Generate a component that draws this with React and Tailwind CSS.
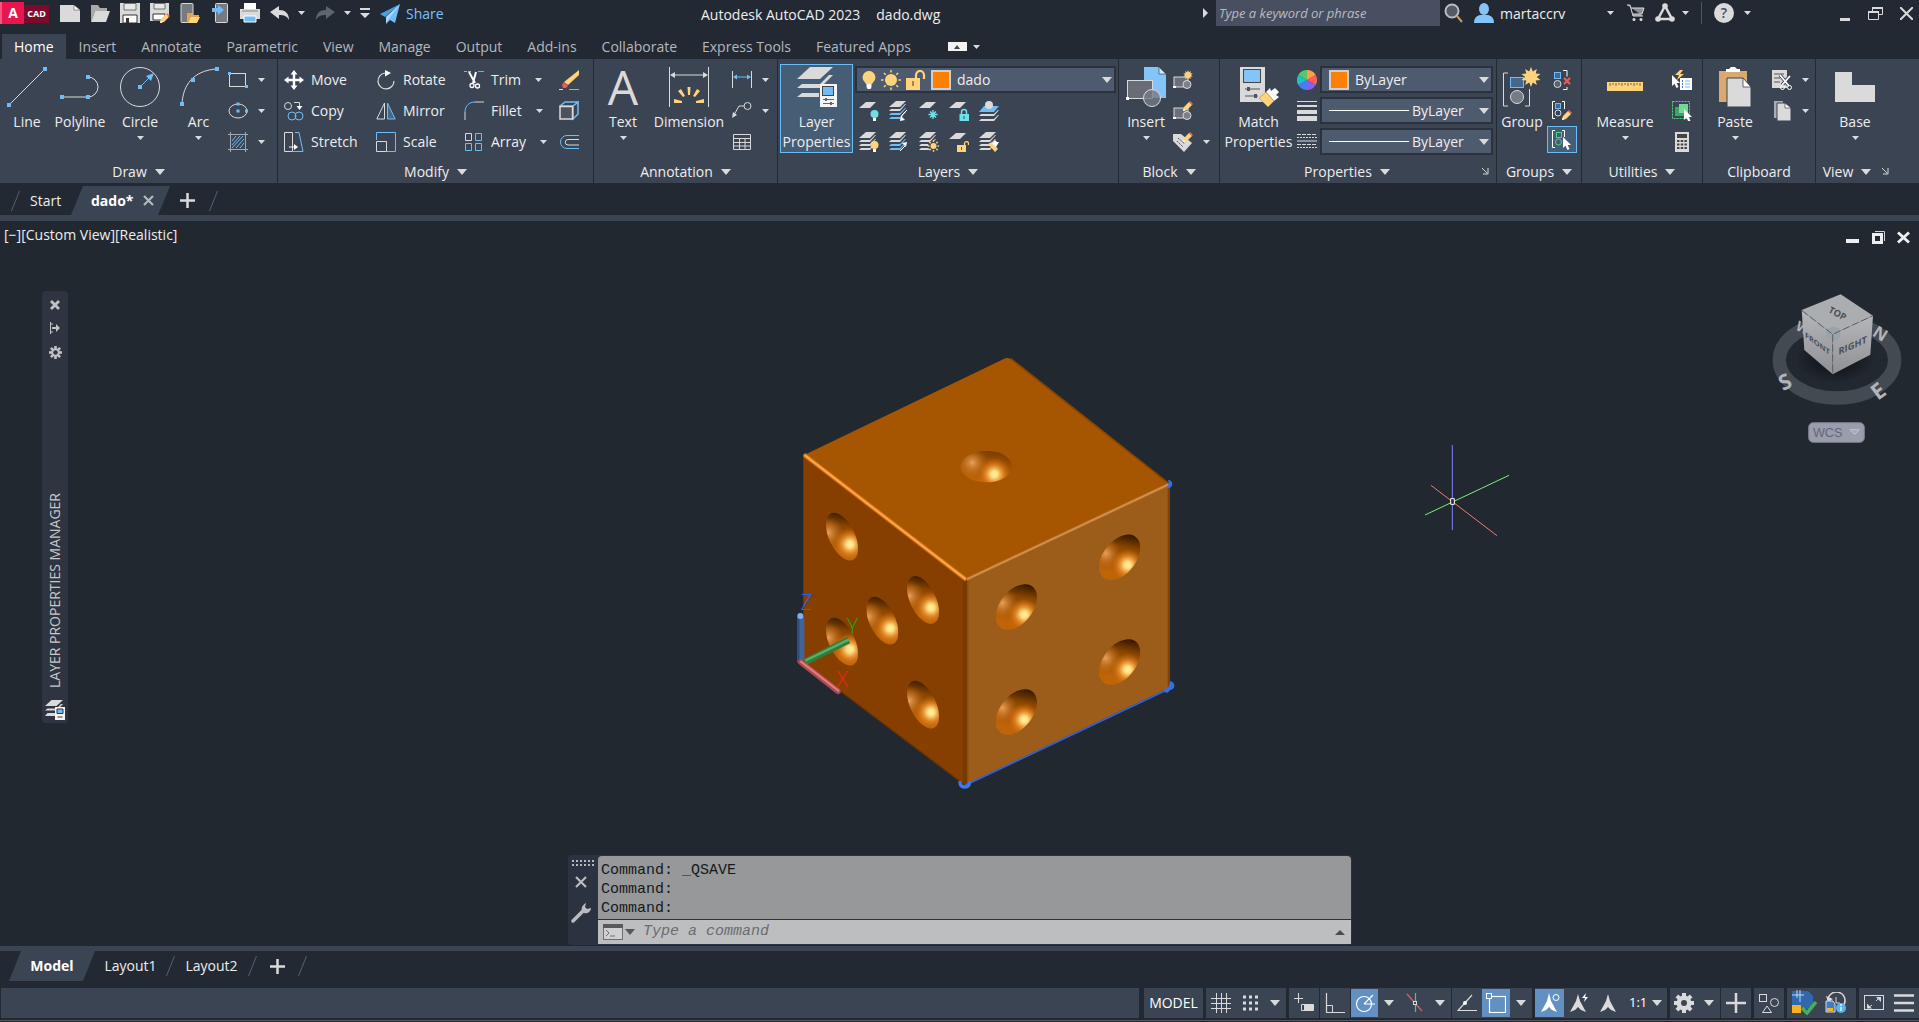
import React, { useState } from 'react';
import clsx from 'clsx';

const G = '#dadada';
const B = '#6fbdf7';
const Y = '#ffd37c';
const T = '#6fe0ea';
const DK = '#3b4453';

function Svg({ w = 20, h = 20, vb, className, children }) {
  return (
    <svg width={w} height={h} viewBox={vb || `0 0 ${w} ${h}`} fill="none" className={clsx('shrink-0', className)} aria-hidden="true">
      {children}
    </svg>
  );
}

function Caret({ size = 'sm', className }) {
  if (size === 'lg') {
    return <Svg w={10} h={6} className={className}><path d="M0 0h10L5 6z" fill={G} /></Svg>;
  }
  return <Svg w={7} h={4} className={className}><path d="M0 0h7L3.5 4z" fill={G} /></Svg>;
}

/* ---------- shared icon parts ---------- */

const Sheet = ({ x = 0, y = 0, fill = G }) => <path transform={`translate(${x} ${y})`} d="M7 0h10l-6 6H0z" fill={fill} />;

const Stack = ({ blue }) => (
  <>
    <path d="M7 0h10l-6 6H0z" fill={G} />
    <path d="M2 8h9l5-5h1l-6 7H0z" fill={G} />
    <path d="M2 12h9l5-5h1l-6 7H0z" fill={blue ? B : G} />
    <path d="M2 16h9l5-5h1l-6 7H0z" fill={blue ? B : G} />
  </>
);

const MiniBulb = ({ fill }) => (
  <>
    <circle cx="15.500" cy="13" r="4" fill={fill} />
    <path d="M14 17h3v3h-3z" fill="#fff" />
  </>
);

const Pencil = ({ x = 0, y = 0 }) => (
  <g transform={`translate(${x} ${y})`}>
    <path d="M0 10l1-4 5-5 3 3-5 5z" fill={Y} />
    <path d="M6 1l1-1 3 3-1 1z" fill="#ef6a63" />
    <path d="M0 10l.6-2.400L2.400 9.400z" fill="#fff" />
  </g>
);

const Cursor = ({ x = 0, y = 0 }) => (
  <path transform={`translate(${x} ${y})`} d="M0 0v11l2.500-2.300L4.500 13l2-1-1.800-4H8z" fill="#fff" />
);

const Star = ({ cx, cy, r }) => {
  const pts = [];
  for (let i = 0; i < 20; i++) {
    const a = (Math.PI * i) / 10 - Math.PI / 2;
    const k = i % 2 ? r * 0.58 : r;
    pts.push(`${cx + k * Math.cos(a)},${cy + k * Math.sin(a)}`);
  }
  return <polygon points={pts.join(' ')} fill={Y} />;
};

const Rays = ({ cx, cy, r1, r2, w = 1.5 }) => (
  <g stroke={Y} strokeWidth={w}>
    {[0, 45, 90, 135, 180, 225, 270, 315].map((d) => (
      <path key={d} transform={`rotate(${d} ${cx} ${cy})`} d={`M${cx + r1} ${cy}H${cx + r2}`} />
    ))}
  </g>
);

const BlockBase = () => (
  <>
    <rect x="1" y="7" width="14" height="10" fill="#6a6f7a" stroke={G} />
    <circle cx="14" cy="14.500" r="4" fill="#7a7f88" stroke={G} />
    <path d="M0 16h3v2H0z" fill="#fff" />
  </>
);

/* ---------- icon set ---------- */

const icons = {
  newFile: <Svg><path d="M0 2h14l6 5v12H0z" fill={G} /><path d="M14 2l6 5h-6z" fill="#fff" stroke="#555" strokeWidth=".6" /></Svg>,
  open: <Svg><path d="M1 2h7l2 3h7v3H5L1 19z" fill="#a9a9a9" /><path d="M5 8h15l-4 11H1z" fill={G} /></Svg>,
  save: <Svg><path d="M0 0h20v20H0z" fill={G} /><path d="M4 .5h12V7H4z" fill="#e8e8e8" stroke="#555" strokeWidth=".8" /><path d="M3 12h14v8H3z" fill="#fff" stroke="#333" /><path d="M6 15h3v5H6z" fill="#333" /></Svg>,
  saveAs: <Svg><path d="M0 0h19v12l-8 6H0z" fill={G} /><path d="M4 .5h11V6H4z" fill="#e8e8e8" stroke="#555" strokeWidth=".8" /><path d="M3 11h12v6H3z" fill="#fff" stroke="#333" /><Pencil x={10} y={10} /></Svg>,
  openMobile: <Svg><rect x="1" y=".5" width="12" height="19" rx="1" fill="#777b80" stroke={G} /><path d="M7 10h5l2 2h5v3h-8l-3 5H7z" fill="#e0a84c" /><path d="M11 14h9l-3 6H8z" fill={Y} /></Svg>,
  saveMobile: <Svg><rect x="5.500" y=".5" width="12" height="19" rx="1" fill="#777b80" stroke={G} /><path d="M2 5h6V2l6 5-6 5V9H2z" fill={B} /></Svg>,
  print: <Svg><path d="M4 0h12v6H4z" fill="#fff" /><path d="M0 6h20v10H0z" fill={G} /><path d="M2 8h16" stroke="#888" /><path d="M4 13h12v6H4z" fill={B} stroke="#fff" /></Svg>,
  undo: <Svg><path d="M0 9l9-6v4c6 0 10 3 10 10-2-4-5-5-10-5v4z" fill={G} /></Svg>,
  redo: <Svg><path d="M20 9l-9-6v4C5 7 1 10 1 17c2-4 5-5 10-5v4z" fill="#5f656f" /></Svg>,
  customize: <Svg w={10} h={12}><path d="M0 1h10v2H0zM0 6h10l-5 5z" fill={G} /></Svg>,
  share: <Svg><path d="M20 0L0 10l5 3z" fill="#4a9fe0" /><path d="M20 0L6 13l0 7 4-4 5 3z" fill={B} /><path d="M20 0L6 13v6z" fill="#a5d8ff" /></Svg>,

  line: <Svg w={40} h={40}><path d="M2 38L38 2" stroke={G} /><path d="M0 36h4v4H0zM36 0h4v4h-4z" fill={B} /></Svg>,
  polyline: <Svg w={40} h={40}><path d="M2 30h26M28 10a10 10 0 0 1 0 20" stroke={G} /><path d="M0 28h4v4H0zM26 28h4v4h-4zM26 8h4v4h-4z" fill={B} /></Svg>,
  circle: <Svg w={40} h={40}><circle cx="20" cy="20" r="19.500" stroke={G} /><path d="M20 20L31 9" stroke={B} /><path d="M34 6l-8 3 5 5z" fill={B} /><path d="M18 18h4v4h-4z" fill={B} /></Svg>,
  arc: <Svg w={40} h={40}><path d="M3 37C4 18 14 4 37 2" stroke={G} /><path d="M1 35h4v4H1zM12 11h4v4h-4zM36 0h4v4h-4z" fill={B} /></Svg>,
  rect: <Svg><rect x="1.500" y="3.500" width="16" height="13" stroke={G} /><path d="M0 2h3v3H0zM17 15h3v3h-3z" fill={B} /></Svg>,
  ellipse: <Svg><ellipse cx="10" cy="10" rx="9" ry="7" stroke={G} /><path d="M8.500 1.500h3v3h-3zM8.500 8.500h3v3h-3zM17 8.500h3v3h-3z" fill={B} /></Svg>,
  hatch: <Svg><path d="M2.500 0v20M17.500 0v20M0 2.500h20M0 17.500h20" stroke="#a5a9b0" /><path d="M4 9l4-5M4 13l8-9M4 16l11-12M8 16l8-9M12 16l4-5" stroke={B} /></Svg>,

  move: <Svg><path d="M10 0l3.500 4.500h-2.300v4.300h4.300V6.500L20 10l-4.500 3.500v-2.300h-4.300v4.300h2.300L10 20l-3.500-4.500h2.300v-4.300H4.500v2.300L0 10l4.500-3.500v2.300h4.300V4.500H6.500z" fill="#fff" /></Svg>,
  copy: <Svg><circle cx="4" cy="5" r="3.500" stroke={G} /><path d="M10 1.500h5.500V6" stroke={G} /><path d="M12.500 5h6l-3 4z" fill="#fff" /><circle cx="8" cy="15" r="4" stroke={B} /><circle cx="15" cy="15" r="4" stroke={B} /></Svg>,
  stretch: <Svg><path d="M.5.500h8v19h-8z" stroke={G} /><path d="M11 .5h4l4 19H8" stroke={B} /><path d="M5 15h6" stroke="#fff" /><path d="M10 12l4 3-4 3z" fill="#fff" /></Svg>,
  rotate: <Svg><path d="M9 3a8 8 0 1 0 9 8" stroke={G} strokeWidth="1.200" /><path d="M9 0l6 3-6 3.500z" fill="#fff" /></Svg>,
  mirror: <Svg><path d="M8.500 2v16H.800z" stroke={G} /><path d="M11.500 2v16h7.700z" stroke={B} fill="#47678a" /></Svg>,
  scale: <Svg><path d="M.5 8V.500h19v19H11" stroke={B} /><path d="M.5 9.500h10v10H.5z" stroke={G} /></Svg>,
  trim: <Svg><path d="M0 1.500h7" stroke={B} strokeDasharray="3 1" /><path d="M14 1.500h6" stroke="#9a9fa8" /><path d="M5 2l6 11M12 2L9 13" stroke="#fff" strokeWidth="2" /><circle cx="8" cy="15.500" r="2" stroke="#fff" strokeWidth="1.300" /><circle cx="13.500" cy="16" r="2" stroke="#fff" strokeWidth="1.300" /></Svg>,
  fillet: <Svg><path d="M1 19V11" stroke={G} /><path d="M1 11C1 5 5 1 11 1" stroke={B} /><path d="M11 1h9" stroke={G} /></Svg>,
  array: <Svg><path d="M1.500 1.500h6v7h-6z" stroke={G} /><path d="M11.500 1.500h6v7h-6zM1.500 11.500h6v7h-6zM11.500 11.500h6v7h-6z" stroke={B} /></Svg>,
  erase: <Svg><path d="M20 0v5L9 15l-4-3z" fill={Y} /><path d="M5 12l4 4-2 2H4l-1-3z" fill="#ef5a55" /><path d="M0 19.500h4" stroke={G} /><path d="M10 19.500h10" stroke={B} /></Svg>,
  explode: <Svg><path d="M1 5l5-4h13l-5 4zM14 5l5-4v12l-5 5z" stroke={B} strokeWidth="1.500" /><rect x="1" y="5.500" width="12.500" height="12.500" fill="#4a5261" stroke={G} strokeWidth="1.500" /></Svg>,
  offset: <Svg><path d="M20 3.500H8a6.500 6.500 0 0 0 0 13h12" stroke={B} /><path d="M20 7.500H9a2.700 2.700 0 0 0 0 5.500h11" stroke={G} /></Svg>,

  dimension: (
    <Svg w={40} h={40}>
      <path d="M.5 0v40M39.500 0v40M2 8h36" stroke={G} />
      <path d="M1 8l5-3v6zM39 8l-5-3v6z" fill={G} />
      <path d="M18.500 20h3l-.5 8h-2zM9 24l3-2 4 7-2 1zM31 24l-3-2-4 7 2 1zM5 32l8 2v2H5zM35 32l-8 2v2h8z" fill={Y} />
    </Svg>
  ),
  linear: <Svg><path d="M.5 1v17M19.500 1v17" stroke={G} /><path d="M2 7h16" stroke={B} /><path d="M1 7l4-2.500v5zM19 7l-4-2.500v5z" fill={B} /></Svg>,
  leader: <Svg><path d="M2 14L7 5h5" stroke={G} /><circle cx="15.500" cy="5" r="3.500" stroke={G} /><path d="M0 17l1-6 4 3z" fill={G} /></Svg>,
  table: <Svg><path d="M1.500 2.500h17v15h-17zM1.500 6.500h17M1.500 10.500h17M1.500 14h17M7.500 6v12M13 6v12" stroke={G} /></Svg>,

  layerProps: (
    <Svg w={40} h={40}>
      <path d="M13 0h23L23 12H0z" fill={G} />
      <path d="M5 17h18l9-9h4L23 21H0zM5 26h17v4H0z" fill={G} />
      <rect x="23" y="17" width="17" height="23" fill="#f4f4f4" />
      <rect x="25.500" y="19.500" width="11" height="9" fill={B} stroke="#444" />
      <path d="M26 32.500h11M26 36.500h11" stroke="#666" />
      <path d="M28 31h2v3h-2zM33 35h2v3h-2z" fill="#666" />
    </Svg>
  ),
  bulb: <Svg w={14} h={20}><path d="M7 1a6.500 6.500 0 0 1 4 11.500l-1 1.500H4l-1-1.500A6.500 6.500 0 0 1 7 1z" fill={Y} /><path d="M4.500 14h5v3l-1 2h-3l-1-2z" fill="#fff" /></Svg>,
  sun: <Svg><circle cx="10" cy="10" r="6" fill={Y} /><Rays cx={10} cy={10} r1={7.5} r2={10} /></Svg>,
  unlock: <Svg><path d="M10 8V5a4 4 0 0 1 8 0v4" stroke={Y} strokeWidth="2.200" /><path d="M0 8h14v12H0z" fill={Y} /><path d="M7 11v5" stroke="#8a6a2a" strokeWidth="1.500" /></Svg>,
  layOff: <Svg><Sheet y={1} /><MiniBulb fill={T} /></Svg>,
  layIso: <Svg><Stack blue /><path d="M12 19l1-5 5-5" stroke="#fff" /><path d="M11 20l1-5 4 4z" fill="#fff" /></Svg>,
  layFreeze: <Svg><Sheet y={1} /><path d="M14 9v9M9.500 13.500h9M11 10.500l6 6M17 10.500l-6 6" stroke={T} strokeWidth="1.400" /></Svg>,
  layLock: <Svg><Sheet y={1} /><path d="M12.500 13v-2a2.500 2.500 0 0 1 5 0v2" stroke={T} strokeWidth="1.500" /><path d="M10.500 13H20v7h-9.500z" fill={T} /><path d="M15 15v3" stroke="#2a5560" /></Svg>,
  layCurrent: <Svg><path d="M5 5h15l-5 6H0z" fill={B} /><circle cx="10" cy="4" r="4" fill={G} /><path d="M2 13h13l4-4h1l-5 6H0zM2 18h13l4-4h1l-5 6H0z" fill={G} /></Svg>,
  layOn: <Svg><Stack /><MiniBulb fill={Y} /></Svg>,
  layUniso: <Svg><Stack blue /><path d="M11 19l6-6" stroke="#fff" /><path d="M18 10l-1 5-4-4z" fill="#fff" /></Svg>,
  layThaw: <Svg><Stack /><circle cx="14.500" cy="14" r="5.500" fill={DK} /><circle cx="14.500" cy="14" r="3" fill={Y} /><Rays cx={14.5} cy={14} r1={4} r2={5.8} /></Svg>,
  layUnlock: <Svg><Sheet y={1} /><path d="M15.500 13v-2a2.200 2.200 0 0 1 4 0v2" stroke={Y} strokeWidth="1.300" /><path d="M8 13h9v7H8z" fill={Y} /><path d="M12.500 15v3" stroke="#7a5a20" /></Svg>,
  layMatch: <Svg><Stack /><path d="M9 12l4-2 6 7-3 3z" fill={Y} /><path d="M13 12l3-4 2 2 2 0-3 5z" fill="#fff" /></Svg>,

  insert: (
    <Svg w={40} h={40}>
      <path d="M18 0h15l7 7v24H18z" fill="#83c5f8" /><path d="M33 0l7 7h-7z" fill="#d5ecff" stroke={DK} strokeWidth=".7" />
      <rect x="1.500" y="13.500" width="25" height="18" fill="#676c77" stroke={G} />
      <circle cx="26" cy="31" r="8.500" fill="#767b85" fillOpacity=".8" stroke={G} />
      <path d="M0 30h3v3H0z" fill="#fff" />
    </Svg>
  ),
  createBlock: <Svg><BlockBase /><Star cx={15} cy={5} r={5} /></Svg>,
  editBlock: <Svg><BlockBase /><Pencil x={10} y={0} /></Svg>,
  editAttr: <Svg><path d="M0 2h8l11 9-8 9L0 9z" fill={G} /><path d="M5 6l7 6M4 9l6 6" stroke="#555" strokeDasharray="2 1" /><Pencil x={10} y={0} /></Svg>,

  matchProps: (
    <Svg w={40} h={40}>
      <path d="M1 0h25v35H1z" fill={G} /><rect x="4.500" y="2.500" width="17" height="13" fill="#83c5f8" stroke="#444" />
      <path d="M6 22h15M6 29h13" stroke="#555" /><path d="M8 20h3v4H8zM15 27h3v4h-3z" fill="#555" />
      <path d="M27 25l4-4 1 3 4-3 4 4-3 3 3 2-5 4z" fill="#fff" /><path d="M20 31l7-6 8 9-6 6z" fill={Y} stroke="#b58a3a" strokeWidth=".6" />
    </Svg>
  ),
  colorWheel: (
    <Svg>
      <path d="M10 10V0a10 10 0 0 1 8.700 5z" fill="#ff9f43" /><path d="M10 10l8.700-5a10 10 0 0 1 0 10z" fill="#ff5d55" />
      <path d="M10 10l8.700 5A10 10 0 0 1 10 20z" fill="#8a5df0" /><path d="M10 10v10a10 10 0 0 1-8.700-5z" fill="#4a7cf0" />
      <path d="M10 10l-8.700 5a10 10 0 0 1 0-10z" fill="#1fc0c8" /><path d="M10 10L1.300 5A10 10 0 0 1 10 0z" fill="#52c96b" />
    </Svg>
  ),
  lineweight: <Svg><path d="M0 0h20v1H0zM0 4h20v2H0zM0 9h20v4H0zM0 15h20v5H0z" fill={G} /></Svg>,
  linetype: <Svg><path d="M0 2.500h20M0 12.500h20" stroke={G} strokeDasharray="4 1" /><path d="M0 5.500h20M0 15.500h20" stroke={G} strokeDasharray="2 1" /><path d="M0 9h20" stroke={G} /></Svg>,

  group: (
    <Svg w={40} h={40}>
      <path d="M6 6H1.500v33H6" stroke={G} /><path d="M23 39h4.500V22" stroke={G} />
      <rect x="8.500" y="10.500" width="13" height="10" fill="#47678a" stroke={B} />
      <circle cx="15" cy="30" r="6.500" fill="#767b85" stroke={G} /><Star cx={29} cy={10} r={10} />
    </Svg>
  ),
  ungroup: <Svg><rect x="2.500" y="2.500" width="6" height="6" fill="#47678a" stroke={B} /><circle cx="5.500" cy="14" r="3.500" fill="#5b616c" stroke={G} /><path d="M11 .5h4v6M15 17v2.500h-4" stroke="#fff" /><path d="M12 8l6 6M18 8l-6 6" stroke="#ef5a55" strokeWidth="2.200" /></Svg>,
  groupEdit: <Svg><path d="M3 .5H.5v17H3M10 .5h2.500V8" stroke="#fff" /><rect x="3.500" y="2.500" width="5" height="5" fill="#47678a" stroke={B} /><circle cx="6" cy="12" r="3" stroke={G} /><Pencil x={10} y={9} /></Svg>,
  groupSel: <Svg><path d="M3 .5H.5v17H3M10 .5h2.500V7" stroke="#fff" /><rect x="4.500" y="2.500" width="5" height="5" stroke="#4fd47a" /><circle cx="6.500" cy="12" r="3" stroke="#4fd47a" /><Cursor x={11} y={7} /></Svg>,

  measure: <Svg w={36} h={40}><path d="M0 15h36v9H0z" fill={Y} /><path d="M3 16v3M6 16v2M9 16v3M12 16v2M15 16v3M18 16v2M21 16v3M24 16v2M27 16v3M30 16v2M33 16v3" stroke="#7a6230" /></Svg>,
  quickSelect: <Svg><path d="M8 0L3 5h4L5 10l7-6H8l3-4z" fill={Y} /><path d="M8 8h12v12H8z" fill="#fff" /><path d="M13 11h5M13 14h5M13 17h5" stroke={B} /><path d="M10 11h1M10 14h1M10 17h1" stroke="#3a7cc0" strokeWidth="2" /><Cursor x={0} y={5} /></Svg>,
  selectAll: <Svg><rect x=".5" y=".5" width="17" height="17" stroke="#4fd47a" strokeDasharray="2 1" /><path d="M3 6h9v9H3z" fill="#3aa661" /><path d="M7 3h9v9H7z" fill="#6fdc93" /><Cursor x={12} y={8} /></Svg>,
  calc: <Svg><path d="M3 0h14v20H3z" fill={G} /><path d="M5 2h10v4H5z" fill="#444" /><path d="M5 9h10M5 12.500h10M5 16h10" stroke="#444" strokeWidth="2" strokeDasharray="2.500 1.200" /></Svg>,

  paste: <Svg w={32} h={40}><path d="M0 4h28v31H0z" fill="#d8aa6f" /><path d="M7 5V2h3l2-2h4l2 2h3v3z" fill="#fff" /><path d="M8 11h16l8 9v20H8z" fill={G} stroke={DK} /><path d="M24 11l8 9h-8z" fill="#fff" stroke={DK} strokeWidth=".8" /></Svg>,
  cut: <Svg><path d="M0 0h15v18H0z" fill={G} /><path d="M2 4h10M2 8h6M2 12h6" stroke="#555" /><path d="M8 5l9 11M18 6l-8 9" stroke={DK} strokeWidth="3.500" /><path d="M8 5l9 11M18 6l-8 9" stroke="#fff" strokeWidth="1.800" /><circle cx="10.500" cy="17.500" r="2" stroke="#fff" /><circle cx="17.500" cy="17.500" r="2" stroke="#fff" /></Svg>,
  copyClip: <Svg><path d="M2 0h9v17H2z" fill="#a9adb3" /><path d="M5 2h8l6 5v13H5z" fill={G} stroke={DK} /><path d="M13 2l6 5h-6z" fill="#fff" stroke={DK} strokeWidth=".7" /></Svg>,
  base: <Svg w={40} h={40}><path d="M0 5h17v13h23v17H0z" fill={G} /></Svg>,
  launcher: <Svg w={7} h={7}><path d="M0 0l5 5M6 0v6H1" stroke={G} /></Svg>,

  search: <Svg><circle cx="8" cy="8" r="6.500" stroke="#b9bcc0" strokeWidth="2" fill="#555a62" /><path d="M13 13l5 6" stroke="#c99a5b" strokeWidth="2" /></Svg>,
  user: <Svg><ellipse cx="10" cy="6" rx="5" ry="6" fill="#83c5f8" /><path d="M0 20c0-6 4-8 7-8h6c3 0 7 2 7 8z" fill="#83c5f8" /></Svg>,
  cart: <Svg w={18} h={18}><path d="M0 1h3l3 11h10M4 4h13l-2 6H6" stroke={G} fill="#8a8e94" /><circle cx="7" cy="15.500" r="1.500" fill={G} /><circle cx="14" cy="15.500" r="1.500" fill={G} /></Svg>,
  apps: <Svg><path d="M10 3L3 16h14z" stroke={G} strokeWidth="2.500" /><circle cx="10" cy="3" r="2.800" fill={G} /><circle cx="3" cy="16" r="2.800" fill={G} /><circle cx="17" cy="16" r="2.800" fill={G} /></Svg>,

  grid: <Svg><path d="M5.500 0v20M10.500 0v20M15.500 0v20M0 5.500h20M0 10.500h20M0 15.500h20" stroke={G} /></Svg>,
  snap: <Svg><path d="M3 4h15M3 10h15M3 16h15" stroke={G} strokeWidth="3" strokeDasharray="3 3" /></Svg>,
  dynInput: <Svg><path d="M4.500 0v10M0 5.500h9" stroke={G} /><path d="M7.500 11.500h12v6h-12z" stroke={G} /><path d="M10 12h9v5h-9z" fill={G} /></Svg>,
  ortho: <Svg><path d="M1.500 0v19.500H20" stroke={G} strokeWidth="1.200" /><path d="M2 12.500h5.500V19" stroke={G} /></Svg>,
  polar: <Svg><circle cx="9" cy="11" r="7.500" stroke="#fff" strokeWidth="1.200" /><path d="M9 11l9-9M9 11h11" stroke="#fff" strokeWidth="1.200" /></Svg>,
  iso: <Svg><path d="M2 1l15 17" stroke="#c8626a" strokeWidth="1.400" /><path d="M10.500 0v19" stroke="#4fc57a" strokeWidth="1.200" /><rect x="8.500" y="8.500" width="3" height="3" fill={DK} stroke={G} /></Svg>,
  track: <Svg><path d="M15 2L1 17.500h19" stroke={G} strokeWidth="1.200" /><circle cx="8" cy="10" r="2" fill="#fff" /></Svg>,
  osnap: <Svg><rect x="3.500" y="3.500" width="16" height="16" stroke="#fff" strokeWidth="1.200" /><rect x=".5" y=".5" width="5" height="5" fill="#6290c3" stroke="#fff" /></Svg>,
  annoVis: <Svg><path d="M9 0l2 8 6 11-5-2-3-3-3 3-5 2 6-11z" fill="#fff" /><circle cx="16" cy="4.500" r="3" stroke="#fff" /></Svg>,
  annoAuto: <Svg><path d="M9 1l2 7 6 11-5-2-3-3-3 3-5 2 6-11z" fill={G} /><path d="M17 0l-4 5h3l-1 4 4-5h-3z" fill="#fff" /></Svg>,
  annoScale: <Svg><path d="M9 1l2 7 6 11-5-2-3-3-3 3-5 2 6-11z" fill={G} /></Svg>,
  gear: (
    <Svg>
      <g fill={G}>{[0, 45, 90, 135].map((d) => <rect key={d} x="8" y="0" width="4" height="20" transform={`rotate(${d} 10 10)`} />)}</g>
      <circle cx="10" cy="10" r="7.500" fill={G} /><circle cx="10" cy="10" r="3" fill={DK} />
    </Svg>
  ),
  plus: <Svg><path d="M10 0v20M0 10h20" stroke={G} strokeWidth="2.500" /></Svg>,
  isolate: <Svg><rect x=".5" y="1.500" width="7" height="7" stroke={G} /><circle cx="15.500" cy="9.500" r="4" stroke={G} /><path d="M8 13l4.500 6.500h-9z" stroke={G} /></Svg>,
  dwgCheck: <Svg w={25} h={26}><path d="M0 1h16l5 5v13H0z" fill="#2f68ad" /><path d="M5 0v8M0 5h12M8 0v12" stroke="#bcd8f5" /><path d="M0 15h9v8H0z" fill="#f5b323" /><path d="M10 18l5 5 9-11" stroke="#4caf50" strokeWidth="3.500" /></Svg>,
  history: <Svg w={22} h={22}><path d="M3 8a8.500 8.500 0 1 1 14 7" stroke={G} strokeWidth="1.500" /><path d="M1 4l2 6 5-3z" fill={G} /><path d="M11 5v6h4" stroke={G} /><path d="M1 9h7l2 3v8H1z" fill="#3f7cc4" stroke={G} /><path d="M2 16h6v3H2z" fill="#f5b323" /><circle cx="16" cy="16" r="5" fill="#5bb3ec" /><path d="M16 15v4M16 12v2" stroke="#fff" strokeWidth="1.300" /></Svg>,
  clean: <Svg><rect x=".5" y="2.500" width="19" height="14" stroke={G} /><path d="M12 8l4-4M8 12l-4 3" stroke={G} /><path d="M17 4v5l-5-5zM3 15.500v-5l5 5z" fill={G} /></Svg>,
  menu: <Svg><path d="M0 2.500h20M0 10h20M0 17.500h20" stroke={G} strokeWidth="2.500" /></Svg>,
};

/* ---------- title bar ---------- */

function IconButton({ icon, label, className, children }) {
  return (
    <button type="button" aria-label={label} className={clsx('flex shrink-0 items-center justify-center', className)}>
      {icon && icons[icon]}
      {children}
    </button>
  );
}

const quickAccess = [
  ['newFile', 'New'], ['open', 'Open'], ['save', 'Save'], ['saveAs', 'Save As'],
  ['openMobile', 'Open from Web & Mobile'], ['saveMobile', 'Save to Web & Mobile'], ['print', 'Plot'], ['undo', 'Undo'],
];

function TitleBar() {
  return (
    <header className="flex h-[34px] shrink-0 items-start bg-[#222933]">
      <div className="flex w-[701px] shrink-0 items-center">
        <button type="button" aria-label="Application menu" className="flex h-[26px] w-[60px] shrink-0 items-start pt-[2px]">
          <span className="flex h-[22px] w-6 items-center justify-center border-l-2 border-[#f0597f] bg-[#e9154e] text-sm font-bold text-white">A</span>
          <span className="flex h-[18px] w-[25px] items-center justify-center self-center bg-[#7a0b2c] text-[9px] font-bold text-white">CAD</span>
        </button>
        <div className="flex h-[26px] items-center gap-[10px]">
          {quickAccess.map(([icon, label]) => <IconButton key={icon} icon={icon} label={label} />)}
        </div>
        <IconButton label="Undo history" className="ml-2"><Caret /></IconButton>
        <IconButton icon="redo" label="Redo" className="ml-[10px]" />
        <IconButton label="Redo history" className="ml-[9px]"><Caret /></IconButton>
        <IconButton icon="customize" label="Customize toolbar" className="ml-[9px]" />
        <button type="button" className="ml-[10px] flex items-center gap-[6px] pt-px text-sm text-[#79c1fa]">
          {icons.share}Share
        </button>
      </div>
      <h1 className="flex h-[29px] shrink-0 items-center gap-4 text-sm text-[#eeeeee]">
        <span>Autodesk AutoCAD 2023</span><span>dado.dwg</span>
      </h1>
      <div className="flex min-w-0 flex-1 items-center justify-end text-sm text-[#eeeeee]">
        <IconButton label="Collapse search" className="mr-[8px]"><Svg w={5} h={10}><path d="M0 0l5 5-5 5z" fill={G} /></Svg></IconButton>
        <input type="text" aria-label="Search" placeholder="Type a keyword or phrase" className="h-[26px] w-[224px] shrink-0 bg-[#474f61] px-[3px] text-[13px] italic outline-none placeholder:text-[#b9bcc4]" />
        <IconButton icon="search" label="Run search" className="ml-1" />
        <button type="button" className="ml-[10px] flex items-center gap-[6px]">
          {icons.user}
          <span className="w-[101px] pt-px text-left text-sm">martaccrv</span>
          <Caret />
        </button>
        <IconButton icon="cart" label="App Store" className="ml-[13px]" />
        <IconButton icon="apps" label="Autodesk apps" className="ml-[10px]" />
        <IconButton label="Apps list" className="ml-[7px]"><Caret /></IconButton>
        <div className="ml-3 h-[22px] w-px bg-[#4b5568]" />
        <IconButton label="Help" className="ml-3 h-5 w-5 rounded-full bg-[#dadada] text-sm font-semibold text-[#444a55]">?</IconButton>
        <IconButton label="Help list" className="ml-[10px]"><Caret /></IconButton>
        <IconButton label="Minimize" className="ml-[89px] h-5 items-end"><Svg w={10} h={5}><path d="M0 0h10v3H0z" fill={G} /></Svg></IconButton>
        <IconButton label="Restore" className="ml-[18px]"><Svg w={15} h={15}><path d="M4.500 5V1.500h10v7H11M.5 5.500h10v8H.5z" stroke={G} /><path d="M4 1h11v2H4zM0 5h11v2H0z" fill={G} /></Svg></IconButton>
        <IconButton label="Close" className="mr-[6px] ml-[17px]"><Svg w={13} h={13}><path d="M0 0l13 13M13 0L0 13" stroke={G} strokeWidth="2" /></Svg></IconButton>
      </div>
    </header>
  );
}

const menuTabs = ['Home', 'Insert', 'Annotate', 'Parametric', 'View', 'Manage', 'Output', 'Add-ins', 'Collaborate', 'Express Tools', 'Featured Apps'];

function MenuTabs() {
  const [active, setActive] = useState('Home');
  return (
    <nav className="flex h-[25px] shrink-0 items-stretch gap-px bg-[#222933] pl-[2px]">
      {menuTabs.map((tab) => (
        <button
          key={tab}
          type="button"
          onClick={() => setActive(tab)}
          className={clsx('px-3 text-sm whitespace-nowrap', tab === active ? 'bg-[#3b4453] text-white' : 'text-[#b4b8be]')}
        >
          {tab}
        </button>
      ))}
      <button type="button" aria-label="Ribbon display" className="ml-6 flex items-center gap-[6px]">
        <span className="flex h-[9px] w-[19px] items-center justify-center bg-[#f2f2f2]">
          <Svg w={6} h={4}><path d="M0 4h6L3 0z" fill="#444" /></Svg>
        </span>
        <Caret />
      </button>
    </nav>
  );
}

/* ---------- ribbon ---------- */

function Panel({ title, className, caret = true, launcher, children }) {
  return (
    <section className={clsx('flex shrink-0 flex-col border-l border-[#222933] first:border-l-0', className)}>
      <div className="flex flex-1 items-start pt-[5px]">{children}</div>
      <div className="flex h-6 items-center pt-px">
        <button type="button" className="flex flex-1 items-center justify-center gap-2 text-sm">
          {title}{caret && <Caret size="lg" />}
        </button>
        {launcher && <IconButton icon="launcher" label={`${title} settings`} className={launcher} />}
      </div>
    </section>
  );
}

function BigButton({ icon, label, caret, className, children }) {
  return (
    <button type="button" className={clsx('flex shrink-0 flex-col items-center pt-[3px] text-sm leading-5', className)}>
      <span className="flex h-10 items-center justify-center">{icon ? icons[icon] : children}</span>
      <span className="mt-[5px] text-center">{label}</span>
      {caret && <Caret className="mt-1" />}
    </button>
  );
}

function Tool({ icon, label, caret, name }) {
  return (
    <button type="button" aria-label={name || label} className="flex h-[31px] items-center text-sm">
      {icons[icon]}
      {label && <span className="ml-[7px]">{label}</span>}
      {caret && <Caret className={label ? 'ml-[14px]' : 'ml-[10px]'} />}
    </button>
  );
}

const Col = ({ className, children }) => <div className={clsx('flex shrink-0 flex-col items-start', className)}>{children}</div>;

function Combo({ label, value, className, children }) {
  return (
    <label className={clsx('flex h-[27px] items-center border-2 border-[#2b323e] bg-[#4e5a6e] pr-[2px] text-sm', className)}>
      {children}
      <select aria-label={label} defaultValue={value} className="min-w-0 flex-1 appearance-none bg-transparent outline-none">
        <option>{value}</option>
      </select>
      <Caret size="lg" />
    </label>
  );
}

const Swatch = () => <span className="h-5 w-5 shrink-0 border-2 border-[#cfcfcf] bg-[#ff8000]" />;

const layerTools = [
  [['layOff', 'Off'], ['layIso', 'Isolate'], ['layFreeze', 'Freeze'], ['layLock', 'Lock'], ['layCurrent', 'Make current']],
  [['layOn', 'Turn all on'], ['layUniso', 'Unisolate'], ['layThaw', 'Thaw all'], ['layUnlock', 'Unlock'], ['layMatch', 'Match layer']],
];

function Ribbon() {
  return (
    <div className="flex h-[124px] shrink-0 overflow-hidden bg-[#3b4453] text-[#eeeeee]">
      <Panel title="Draw" className="w-[277px]">
        <BigButton icon="line" label="Line" className="w-[54px]" />
        <BigButton icon="polyline" label="Polyline" className="w-[52px]" />
        <BigButton icon="circle" label="Circle" caret className="w-[68px]" />
        <BigButton icon="arc" label="Arc" caret className="w-[49px]" />
        <Col className="ml-[5px]">
          <Tool icon="rect" name="Rectangle" caret />
          <Tool icon="ellipse" name="Ellipse" caret />
          <Tool icon="hatch" name="Hatch" caret />
        </Col>
      </Panel>

      <Panel title="Modify" className="w-[316px]">
        <Col className="ml-[6px] w-[92px]">
          <Tool icon="move" label="Move" />
          <Tool icon="copy" label="Copy" />
          <Tool icon="stretch" label="Stretch" />
        </Col>
        <Col className="w-[88px]">
          <Tool icon="rotate" label="Rotate" />
          <Tool icon="mirror" label="Mirror" />
          <Tool icon="scale" label="Scale" />
        </Col>
        <Col className="w-[95px]">
          <Tool icon="trim" label="Trim" caret />
          <Tool icon="fillet" label="Fillet" caret />
          <Tool icon="array" label="Array" caret />
        </Col>
        <Col>
          <Tool icon="erase" name="Erase" />
          <Tool icon="explode" name="Explode" />
          <Tool icon="offset" name="Offset" />
        </Col>
      </Panel>

      <Panel title="Annotation" className="w-[184px]">
        <BigButton label="Text" caret className="w-[58px]">
          <span className="text-5xl leading-10 text-[#dadada]">A</span>
        </BigButton>
        <BigButton icon="dimension" label="Dimension" className="w-[74px]" />
        <Col className="ml-[6px]">
          <Tool icon="linear" name="Linear" caret />
          <Tool icon="leader" name="Leader" caret />
          <Tool icon="table" name="Table" />
        </Col>
      </Panel>

      <Panel title="Layers" className="w-[341px]">
        <button type="button" className="ml-[2px] flex h-[89px] w-[73px] shrink-0 flex-col items-center border border-[#6cbcf8] bg-[#465d76] pt-[2px] text-sm leading-5">
          {icons.layerProps}
          <span className="mt-[5px]">Layer</span>
          <span>Properties</span>
        </button>
        <div className="ml-[2px] flex flex-1 flex-col pr-[2px]">
          <div className="flex h-[31px] items-center">
            <Combo label="Layer" value="dado" className="flex-1 pl-[5px]">
              <span className="flex items-center gap-[5px] pr-[6px]">
                {icons.bulb}{icons.sun}{icons.unlock}<Swatch />
              </span>
            </Combo>
          </div>
          {layerTools.map((row, i) => (
            <div key={i} className="flex h-[31px] items-center gap-[10px] pl-1">
              {row.map(([icon, label]) => <IconButton key={icon} icon={icon} label={label} />)}
            </div>
          ))}
        </div>
      </Panel>

      <Panel title="Block" className="w-[101px]">
        <BigButton icon="insert" label="Insert" caret className="w-[54px]" />
        <Col>
          <Tool icon="createBlock" name="Create" />
          <Tool icon="editBlock" name="Edit" />
          <Tool icon="editAttr" name="Edit attributes" caret />
        </Col>
      </Panel>

      <Panel title="Properties" launcher="mr-[7px] ml-2" className="w-[277px]">
        <BigButton icon="matchProps" label={<>Match<br />Properties</>} className="w-[77px]" />
        <div className="flex flex-1 flex-col pr-[3px]">
          <div className="flex h-[31px] items-center gap-[3px]">
            {icons.colorWheel}
            <Combo label="Object color" value="ByLayer" className="flex-1 gap-[6px] pl-[7px]"><Swatch /></Combo>
          </div>
          {['lineweight', 'linetype'].map((kind) => (
            <div key={kind} className="flex h-[31px] items-center gap-[3px]">
              {icons[kind]}
              <Combo label={kind} value="ByLayer" className="flex-1 gap-[3px] pl-[7px]">
                <span className="h-px w-20 shrink-0 bg-white" />
              </Combo>
            </div>
          ))}
        </div>
      </Panel>

      <Panel title="Groups" className="w-[85px]">
        <BigButton icon="group" label="Group" className="w-[50px]" />
        <Col>
          <IconButton icon="ungroup" label="Ungroup" className="h-[31px] w-[30px]" />
          <IconButton icon="groupEdit" label="Group edit" className="h-[31px] w-[30px]" />
          <IconButton icon="groupSel" label="Group selection" className="h-[27px] w-[30px] border border-[#6cbcf8] bg-[#465d76]" />
        </Col>
      </Panel>

      <Panel title="Utilities" className="w-[121px]">
        <BigButton icon="measure" label="Measure" caret className="ml-[10px] w-[66px]" />
        <Col className="ml-[14px]">
          <Tool icon="quickSelect" name="Quick select" />
          <Tool icon="selectAll" name="Select all" />
          <Tool icon="calc" name="Calculator" />
        </Col>
      </Panel>

      <Panel title="Clipboard" caret={false} className="w-[113px]">
        <BigButton icon="paste" label="Paste" caret className="ml-[9px] w-[46px]" />
        <Col className="ml-[14px]">
          <Tool icon="cut" name="Cut" caret />
          <Tool icon="copyClip" name="Copy clip" caret />
        </Col>
      </Panel>

      <Panel title="View" launcher="mr-[30px] ml-1" className="flex-1">
        <BigButton icon="base" label="Base" caret className="ml-[15px] w-[48px]" />
      </Panel>
    </div>
  );
}

/* ---------- file and layout tabs ---------- */

const Slash = () => <Svg w={9} h={20}><path d="M8.500 0L.5 20" stroke="#56606f" /></Svg>;
const Plus = () => <Svg w={15} h={15}><path d="M7.500 0v15M0 7.500h15" stroke={G} strokeWidth="2.500" /></Svg>;

function FileTabs() {
  return (
    <div className="flex h-[38px] shrink-0 flex-col border-b-[6px] border-[#3b4453] bg-[#222933] text-sm">
      <div className="flex h-8 items-center pt-[3px] pl-[11px] text-[#eeeeee]">
        <Slash />
        <button type="button" className="w-[51px] pl-[10px] text-left">Start</button>
        <div className="flex h-[29px] w-[99px] items-center bg-[#3b4453] pl-5 font-bold text-white [clip-path:polygon(12px_0,100%_0,87px_100%,0_100%)]">
          <button type="button" className="w-[52px] text-left">dado*</button>
          <IconButton label="Close dado"><Svg w={11} h={11}><path d="M1 1l9 9M10 1l-9 9" stroke="#b4b8be" strokeWidth="2.200" /></Svg></IconButton>
        </div>
        <IconButton label="New drawing" className="ml-[10px] mr-[14px]"><Plus /></IconButton>
        <Slash />
      </div>
    </div>
  );
}

function LayoutTabs() {
  return (
    <div className="flex h-[42px] shrink-0 items-start border-t-[5px] border-[#3b4453] bg-[#222933] pl-[9px] text-sm text-[#eeeeee]">
      <button type="button" className="h-[30px] w-[86px] bg-[#3b4453] font-bold text-white [clip-path:polygon(12px_0,100%_0,74px_100%,0_100%)]">Model</button>
      <div className="flex h-[30px] items-center">
        <button type="button" className="w-[71px]">Layout1</button>
        <Slash />
        <button type="button" className="w-[73px]">Layout2</button>
        <Slash />
        <IconButton label="New layout" className="mx-[13px]"><Plus /></IconButton>
        <Slash />
      </div>
    </div>
  );
}

/* ---------- drawing area ---------- */

function Pip({ x, y, face }) {
  return (
    <g transform={`translate(${x} ${y})`} clipPath={`url(#pip-${face})`}>
      <rect x="-85" y="-80" width="170" height="160" fill={face === 'top' ? 'url(#pip-base-top)' : 'url(#pip-base)'} />
      <rect x="-85" y="-80" width="170" height="160" fill="url(#pip-soft)" />
      <rect x="-85" y="-80" width="170" height="160" fill="url(#pip-hot)" />
    </g>
  );
}

const leftPips = [[186, 590], [429, 780], [307, 842], [186, 905], [429, 1094]];
const rightPips = [[709, 801], [1019, 652], [709, 1116], [1019, 966]];

function Die() {
  return (
    <svg viewBox="0 0 1260 1380" className="absolute top-[119px] left-[calc(50%-180px)] h-[460px] w-[420px]" role="img" aria-label="Die model">
      <defs>
        <linearGradient id="pip-base" gradientUnits="userSpaceOnUse" x1="24" y1="-72" x2="0" y2="50">
          <stop offset="0" stopColor="#2e1500" /><stop offset=".35" stopColor="#8a4500" /><stop offset="1" stopColor="#c06408" />
        </linearGradient>
        <linearGradient id="pip-base-top" gradientUnits="userSpaceOnUse" x1="20" y1="-60" x2="0" y2="46">
          <stop offset="0" stopColor="#6b3400" /><stop offset=".4" stopColor="#9a4e02" /><stop offset="1" stopColor="#c06408" />
        </linearGradient>
        <radialGradient id="pip-soft" gradientUnits="userSpaceOnUse" cx="-42" cy="-12" r="46">
          <stop offset="0" stopColor="#e9a15a" /><stop offset="1" stopColor="#c06a14" stopOpacity="0" />
        </radialGradient>
        <radialGradient id="pip-hot" gradientUnits="userSpaceOnUse" cx="24" cy="23" r="50">
          <stop offset="0" stopColor="#fff19c" /><stop offset=".2" stopColor="#ffe184" />
          <stop offset=".55" stopColor="#e88a28" stopOpacity=".8" /><stop offset="1" stopColor="#c76606" stopOpacity="0" />
        </radialGradient>
        <clipPath id="pip-top"><circle r="1" transform="matrix(48 37 61 -29 0 0)" /></clipPath>
        <clipPath id="pip-left"><circle r="1" transform="matrix(48 36 0 62 0 0)" /></clipPath>
        <clipPath id="pip-right"><circle r="1" transform="matrix(62 -29 0 62 0 0)" /></clipPath>
      </defs>

      <path d="M70 348L555 717v618L70 970z" fill="#873f00" />
      <path d="M555 717l614-284v610L555 1335z" fill="#9c5c1a" />
      <path d="M74 344L676 55q8-3 16 1l474 374-611 287z" fill="#a65500" />
      <path d="M692 56l474 374" stroke="#8a4500" strokeWidth="5" />
      <path d="M1166 434v606" stroke="#7d4206" strokeWidth="6" />
      <path d="M555 717v616" stroke="#773b00" strokeWidth="14" />
      <path d="M564 722v610" stroke="#8e4f10" strokeWidth="3" />
      <path d="M560 718l606-285" stroke="#c27a33" strokeWidth="9" />
      <path d="M560 718l606-285" stroke="#d99a5a" strokeWidth="3" />
      <path d="M76 347l479 369" stroke="#d0700f" strokeWidth="13" strokeLinecap="round" />
      <path d="M76 347l479 369" stroke="#ffa64c" strokeWidth="6" strokeLinecap="round" />
      <path d="M70 970l482 363" stroke="#6b3300" strokeWidth="4" />

      <Pip x={619} y={380} face="top" />
      {leftPips.map(([x, y]) => <Pip key={`${x}-${y}`} x={x} y={y} face="left" />)}
      {rightPips.map(([x, y]) => <Pip key={`${x}-${y}`} x={x} y={y} face="right" />)}

      <path d="M556 1336l612-290" stroke="#2c66e0" strokeWidth="5" />
      <path d="M1164 419a13 13 0 1 1-7 24l10-10z" fill="#2f6ff0" />
      <path d="M1170 1024a13 13 0 0 1 0 26q-6 12-16 6l-2-6 14-8z" fill="#2f6ff0" />
      <path d="M540 1327q0 14 14 14t14-12" fill="none" stroke="#3b7af5" strokeWidth="10" strokeLinecap="round" />

      <g strokeLinecap="round">
        <path d="M62 830v136" stroke="#3e659f" strokeWidth="22" strokeLinecap="butt" />
        <path d="M55 832v134" stroke="#2d4a78" strokeWidth="6" />
        <circle cx="61" cy="828" r="9" fill="#7fb0ee" />
        <path d="M76 965l130-64" stroke="#2f7d3c" strokeWidth="20" strokeLinecap="butt" />
        <path d="M76 962l130-63" stroke="#5aad62" strokeWidth="7" strokeLinecap="butt" />
        <path d="M62 966l112 88" stroke="#a84a50" strokeWidth="17" />
        <path d="M63 965l112 87" stroke="#e07b7f" strokeWidth="7" />
      </g>
      <g fontFamily="Open Sans" fontWeight="300" fontSize="64" textAnchor="middle">
        <text x="80" y="809" fill="#1a66ff">Z</text>
        <text x="218" y="882" fill="#18a818">Y</text>
        <text x="187" y="1042" fill="#f02020">X</text>
      </g>
    </svg>
  );
}

function ViewCube() {
  return (
    <svg viewBox="1101 210 420 480" className="absolute top-[69px] right-3 h-[160px] w-[140px]" role="img" aria-label="View cube">
      <defs>
        <linearGradient id="cube-l" x1="0" y1="0" x2="0" y2="1"><stop offset="0" stopColor="#b4b6b9" /><stop offset="1" stopColor="#8f9194" /></linearGradient>
        <radialGradient id="cube-shadow"><stop offset=".5" stopColor="#111519" stopOpacity=".7" /><stop offset="1" stopColor="#111519" stopOpacity="0" /></radialGradient>
      </defs>
      <ellipse cx="1311" cy="420" rx="173" ry="114" fill="none" stroke="#444a52" strokeWidth="40" />
      <ellipse cx="1305" cy="415" rx="120" ry="75" fill="url(#cube-shadow)" />
      <g fill="#b2b4b6" fontFamily="Open Sans" fontWeight="700" textAnchor="middle">
        <text transform="translate(1203 337) rotate(25)" fontSize="42">W</text>
        <text transform="translate(1432 356) rotate(32)" fontSize="50">N</text>
        <text transform="translate(1165 506) rotate(-26)" fontSize="64">S</text>
        <text transform="translate(1448 532) rotate(-36)" fontSize="66">E</text>
      </g>
      <path d="M1205 270l117-47 97 64-121 56z" fill="#abaeb1" />
      <path d="M1205 270l93 73v120l-85-73z" fill="url(#cube-l)" />
      <path d="M1298 343l121-56-8 117-113 59z" fill="url(#cube-l)" />
      <path d="M1280 327l22-8 18 9v26l-20 10-20-12z" fill="#9aa2ac" />
      <path d="M1206 272l92 71 121-56M1298 343v120" fill="none" stroke="#5c6066" strokeWidth="3" strokeDasharray="22 8" />
      <g fill="#4b5057" fontFamily="Open Sans" fontWeight="700" textAnchor="middle">
        <text transform="translate(1308 289) rotate(28)" fontSize="28">TOP</text>
        <text transform="translate(1252 378) skewY(36)" fontSize="22">FRONT</text>
        <text transform="translate(1358 386) skewY(-24)" fontSize="28">RIGHT</text>
      </g>
      <rect x="1226" y="608" width="167" height="59" rx="14" fill="#9a9eac" stroke="#7d818f" strokeWidth="3" />
      <text x="1283" y="651" fill="#62667a" fontFamily="Liberation Sans" fontSize="38" textAnchor="middle">WCS</text>
      <path d="M1350 629h28l-14 14z" fill="#a5a9b8" stroke="#c3c6d2" strokeWidth="3" />
    </svg>
  );
}

function Crosshair() {
  return (
    <svg viewBox="60 660 285 300" className="absolute top-[219px] left-[74%] h-[100px] w-[95px]" fill="none" strokeWidth="3" aria-hidden="true">
      <path d="M75 885L327 766" stroke="#7cf07c" />
      <path d="M93 796l198 151" stroke="#f07878" />
      <path d="M157 675v255" stroke="#8080ff" />
      <path d="M152 836h11v17h-11z" fill="#222830" stroke="#fff" />
    </svg>
  );
}

function LayerPalette() {
  return (
    <aside className="absolute top-[70px] left-[42px] flex h-[432px] w-[26px] flex-col items-center rounded-sm bg-[#2f3540] pt-[9px]">
      <IconButton label="Close palette"><Svg w={10} h={10}><path d="M1 1l8 8M9 1L1 9" stroke="#c0c2c6" strokeWidth="2.800" /></Svg></IconButton>
      <IconButton label="Auto-hide" className="mt-3"><Svg w={10} h={12}><path d="M.5 0v12M1 2h2M1 10h2" stroke="#c0c2c6" /><path d="M2 5h4V2l4 4-4 4V7H2z" fill="#c0c2c6" /></Svg></IconButton>
      <IconButton label="Palette settings" className="mt-3">
        <Svg w={13} h={13} vb="0 0 20 20">
          {[0, 45, 90, 135].map((d) => <rect key={d} x="8" y="0" width="4" height="20" fill="#c0c2c6" transform={`rotate(${d} 10 10)`} />)}
          <circle cx="10" cy="10" r="6.500" fill="#c0c2c6" /><circle cx="10" cy="10" r="3.500" fill="#2f3540" />
        </Svg>
      </IconButton>
      <div className="mt-auto rotate-180 text-sm leading-4 whitespace-nowrap text-[#c6c8cb] [writing-mode:vertical-rl]">LAYER PROPERTIES MANAGER</div>
      <div className="mt-3 mb-[3px]">
        <Svg w={20} h={20} vb="0 0 40 40">
          <path d="M13 0h23L23 12H0zM5 17h18l9-9h4L23 21H0zM5 26h17v6H0z" fill={G} />
          <path d="M20 14h20v26H20z" fill="#f4f4f4" /><path d="M24 18h12v9H24z" fill={B} stroke="#333" strokeWidth="2" /><path d="M25 34h10" stroke="#777" strokeWidth="3" />
        </Svg>
      </div>
    </aside>
  );
}

function CommandWindow() {
  return (
    <div className="absolute bottom-px left-[568px] flex w-[784px] max-w-full rounded-sm bg-[#2c3340] p-px pl-0">
      <div className="flex w-[30px] shrink-0 flex-col items-center pt-1">
        <Svg w={22} h={7}><path d="M0 1h22M0 5h22" stroke="#b4b8be" strokeWidth="2" strokeDasharray="2 2" /></Svg>
        <div className="flex flex-col items-center gap-[15px] pt-[9px] pr-1">
          <IconButton label="Close command line"><Svg w={12} h={12}><path d="M1 1l10 10M11 1L1 11" stroke="#b9bbbe" strokeWidth="2.200" /></Svg></IconButton>
          <IconButton label="Customize command line">
            <Svg w={20} h={20}><path d="M2 18L12 8" stroke="#b9bbbe" strokeWidth="3.500" strokeLinecap="round" /><path d="M15 0l-1 4 2 2 4-1c0 4-4 6-7 5-2-1-3-3-2-6 1-2 2-3 4-4z" fill="#b9bbbe" /></Svg>
          </IconButton>
        </div>
      </div>
      <div className="flex min-w-0 flex-1 flex-col font-['Liberation_Mono',monospace] text-[15px]">
        <div className="h-[63px] rounded-t-sm bg-[#979899] pt-[5px] pl-[3px] leading-[19px] text-[#16181b]">
          <p>Command: _QSAVE</p>
          <p>Command:</p>
          <p>Command:</p>
        </div>
        <div className="mt-px flex h-6 items-center bg-[#bdbec0] pr-[6px] pl-[5px]">
          <button type="button" aria-label="Recent commands" className="flex items-center gap-[2px]">
            <Svg w={20} h={16}><rect x=".5" y=".5" width="19" height="15" fill="#cfd0d2" stroke="#6d6e70" /><path d="M0 0h20v4H0z" fill="#58595b" /><path d="M3 6l3 3-3 3M7 12h5" stroke="#6d6e70" /></Svg>
            <Svg w={10} h={6}><path d="M0 0h10L5 6z" fill="#55575a" /></Svg>
          </button>
          <input type="text" aria-label="Command" placeholder="Type a command" className="ml-2 min-w-0 flex-1 bg-transparent pt-px italic outline-none placeholder:text-[#6a6c70]" />
          <IconButton label="Show history"><Svg w={10} h={5}><path d="M0 5h10L5 0z" fill="#4a4c50" /></Svg></IconButton>
        </div>
      </div>
    </div>
  );
}

function Canvas() {
  return (
    <main className="relative min-h-0 flex-1 overflow-hidden bg-[#222830]">
      <div className="flex items-center justify-between pt-1 pr-[9px] pl-1">
        <button type="button" className="text-sm text-[#eeeeee]">[−][Custom View][Realistic]</button>
        <div className="flex items-center gap-3 pt-[5px]">
          <IconButton label="Minimize view"><Svg w={14} h={13}><path d="M0 8h13v4H0z" fill="#eee" /></Svg></IconButton>
          <IconButton label="Restore view"><Svg w={13} h={13}><path d="M3 .5h9.500V10" stroke="#cfd0e0" /><path d="M1.500 3.500h8v8h-8z" stroke="#eee" strokeWidth="3" /></Svg></IconButton>
          <IconButton label="Close view"><Svg w={13} h={13}><path d="M1 1.500l11 10M12 1.500l-11 10" stroke="#eee" strokeWidth="3" /></Svg></IconButton>
        </div>
      </div>
      <LayerPalette />
      <Die />
      <Crosshair />
      <ViewCube />
      <CommandWindow />
    </main>
  );
}

/* ---------- status bar ---------- */

const Cell = ({ className, children }) => <div className={clsx('flex h-full shrink-0 items-center bg-[#3b4453]', className)}>{children}</div>;

function Toggle({ icon, label, on, className }) {
  return (
    <button type="button" aria-label={label} aria-pressed={!!on} className={clsx('flex h-7 items-center justify-center', className || 'w-[30px]', on && 'bg-[#6290c3]')}>
      {icons[icon]}
    </button>
  );
}

const More = ({ label }) => <IconButton label={label} className="w-[22px]"><Caret size="lg" /></IconButton>;

function StatusBar() {
  return (
    <footer className="flex h-[34px] shrink-0 flex-col bg-[#222933]">
      <div className="flex h-[30px] items-center pl-px text-[#eeeeee]">
        <div className="mr-[5px] h-full flex-1 bg-[#3b4453]" />
        <Cell className="mr-[3px] w-[59px] justify-center text-sm text-white"><button type="button">MODEL</button></Cell>
        <Cell className="mr-[3px] w-20"><Toggle icon="grid" label="Grid" /><Toggle icon="snap" label="Snap" /><More label="Snap options" /></Cell>
        <Cell className="mr-px"><Toggle icon="dynInput" label="Dynamic input" /></Cell>
        <Cell className="mr-px"><Toggle icon="ortho" label="Ortho" /></Cell>
        <Cell className="mr-px w-[100px]">
          <Toggle icon="polar" label="Polar tracking" on className="w-7" /><More label="Polar options" />
          <Toggle icon="iso" label="Isometric drafting" /><More label="Isometric options" />
        </Cell>
        <Cell className="mr-[3px] w-20"><Toggle icon="track" label="Object snap tracking" /><Toggle icon="osnap" label="Object snap" on className="w-7" /><More label="Snap settings" /></Cell>
        <Cell className="mr-[3px] w-[132px]">
          <Toggle icon="annoVis" label="Annotation visibility" on className="w-[29px]" />
          <Toggle icon="annoAuto" label="Auto scale" />
          <Toggle icon="annoScale" label="Annotation scale" />
          <button type="button" className="flex items-center gap-[5px] pl-[5px] text-[13px] text-white">1:1<Caret size="lg" /></button>
        </Cell>
        <Cell className="mr-px w-[50px]"><Toggle icon="gear" label="Workspace" /><More label="Workspace list" /></Cell>
        <Cell className="mr-[3px]"><Toggle icon="plus" label="Annotation monitor" /></Cell>
        <Cell className="mr-[3px]"><Toggle icon="isolate" label="Isolate objects" /></Cell>
        <Cell className="mr-[3px] w-[69px]"><Toggle icon="dwgCheck" label="Trusted file" className="w-[34px]" /><Toggle icon="history" label="Drawing history" className="w-[30px]" /></Cell>
        <Cell className="w-[60px]"><Toggle icon="clean" label="Clean screen" /><Toggle icon="menu" label="Customization" /></Cell>
      </div>
      <div className="mt-[2px] h-px bg-[#56575a]" />
    </footer>
  );
}

export default function App() {
  return (
    <div className="flex h-screen flex-col overflow-hidden bg-[#222933] font-['Open_Sans','Noto_Sans',sans-serif]">
      <TitleBar />
      <MenuTabs />
      <Ribbon />
      <FileTabs />
      <Canvas />
      <LayoutTabs />
      <StatusBar />
    </div>
  );
}
